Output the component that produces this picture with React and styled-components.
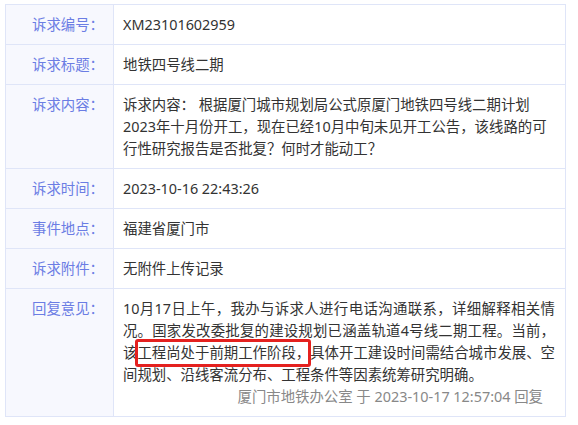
import React from 'react'
import styled, { createGlobalStyle } from 'styled-components'

const GlobalStyle = createGlobalStyle`
  html, body {
    margin: 0;
    padding: 0;
    background: #fff;
  }
  body {
    font-family: "Noto Sans", "Noto Sans CJK SC", sans-serif;
    font-size: 14.4px;
    color: #333;
  }
`

const Page = styled.div`
  padding: 4px 0 0 5px;
`

const Table = styled.div`
  width: 561px;
  box-sizing: border-box;
  border: 1px solid #dfe5f8;
  border-bottom: none;
`

const Row = styled.div`
  display: grid;
  grid-template-columns: 108px 1fr;
  border-bottom: 1px solid #dfe5f8;
`

const Label = styled.div`
  background: #f7f8fe;
  color: #6b7de4;
  text-align: right;
  padding: 8.5px 9px 8.5px 0;
  line-height: 22px;
  border-right: 1px solid #dfe5f8;
`

const Value = styled.div`
  position: relative;
  padding: 8.5px 10px 8.5px 9px;
  line-height: 22px;
  color: #333;
`

const Reply = styled.p`
  margin: 0;
  text-align: justify;
`

const Signature = styled.div`
  text-align: right;
  color: #888;
  padding-right: 12px;
`

const Mark = styled.span`
  position: absolute;
  left: 21px;
  top: 50px;
  width: 176px;
  height: 28px;
  box-sizing: border-box;
  border: 3px solid #e4211f;
  border-radius: 3px;
  pointer-events: none;
`

const rows = [
  ['诉求编号：', 'XM23101602959'],
  ['诉求标题：', '地铁四号线二期'],
  ['诉求内容：', '诉求内容： 根据厦门城市规划局公式原厦门地铁四号线二期计划2023年十月份开工，现在已经10月中旬未见开工公告，该线路的可行性研究报告是否批复？何时才能动工？'],
  ['诉求时间：', '2023-10-16 22:43:26'],
  ['事件地点：', '福建省厦门市'],
  ['诉求附件：', '无附件上传记录'],
]

export default function App() {
  return <Page>
    <GlobalStyle />
    <Table>
      {rows.map(([label, value]) => (
        <Row key={label}>
          <Label>{label}</Label>
          <Value>{value}</Value>
        </Row>
      ))}
      <Row>
        <Label>回复意见：</Label>
        <Value>
          <Reply>
            10月17日上午，我办与诉求人进行电话沟通联系，详细解释相关情况。国家发改委批复的建设规划已涵盖轨道4号线二期工程。当前，该工程尚处于前期工作阶段，具体开工建设时间需结合城市发展、空间规划、沿线客流分布、工程条件等因素统筹研究明确。
          </Reply>
          <Signature>厦门市地铁办公室 于 2023-10-17 12:57:04 回复</Signature>
          <Mark />
        </Value>
      </Row>
    </Table>
  </Page>
}
